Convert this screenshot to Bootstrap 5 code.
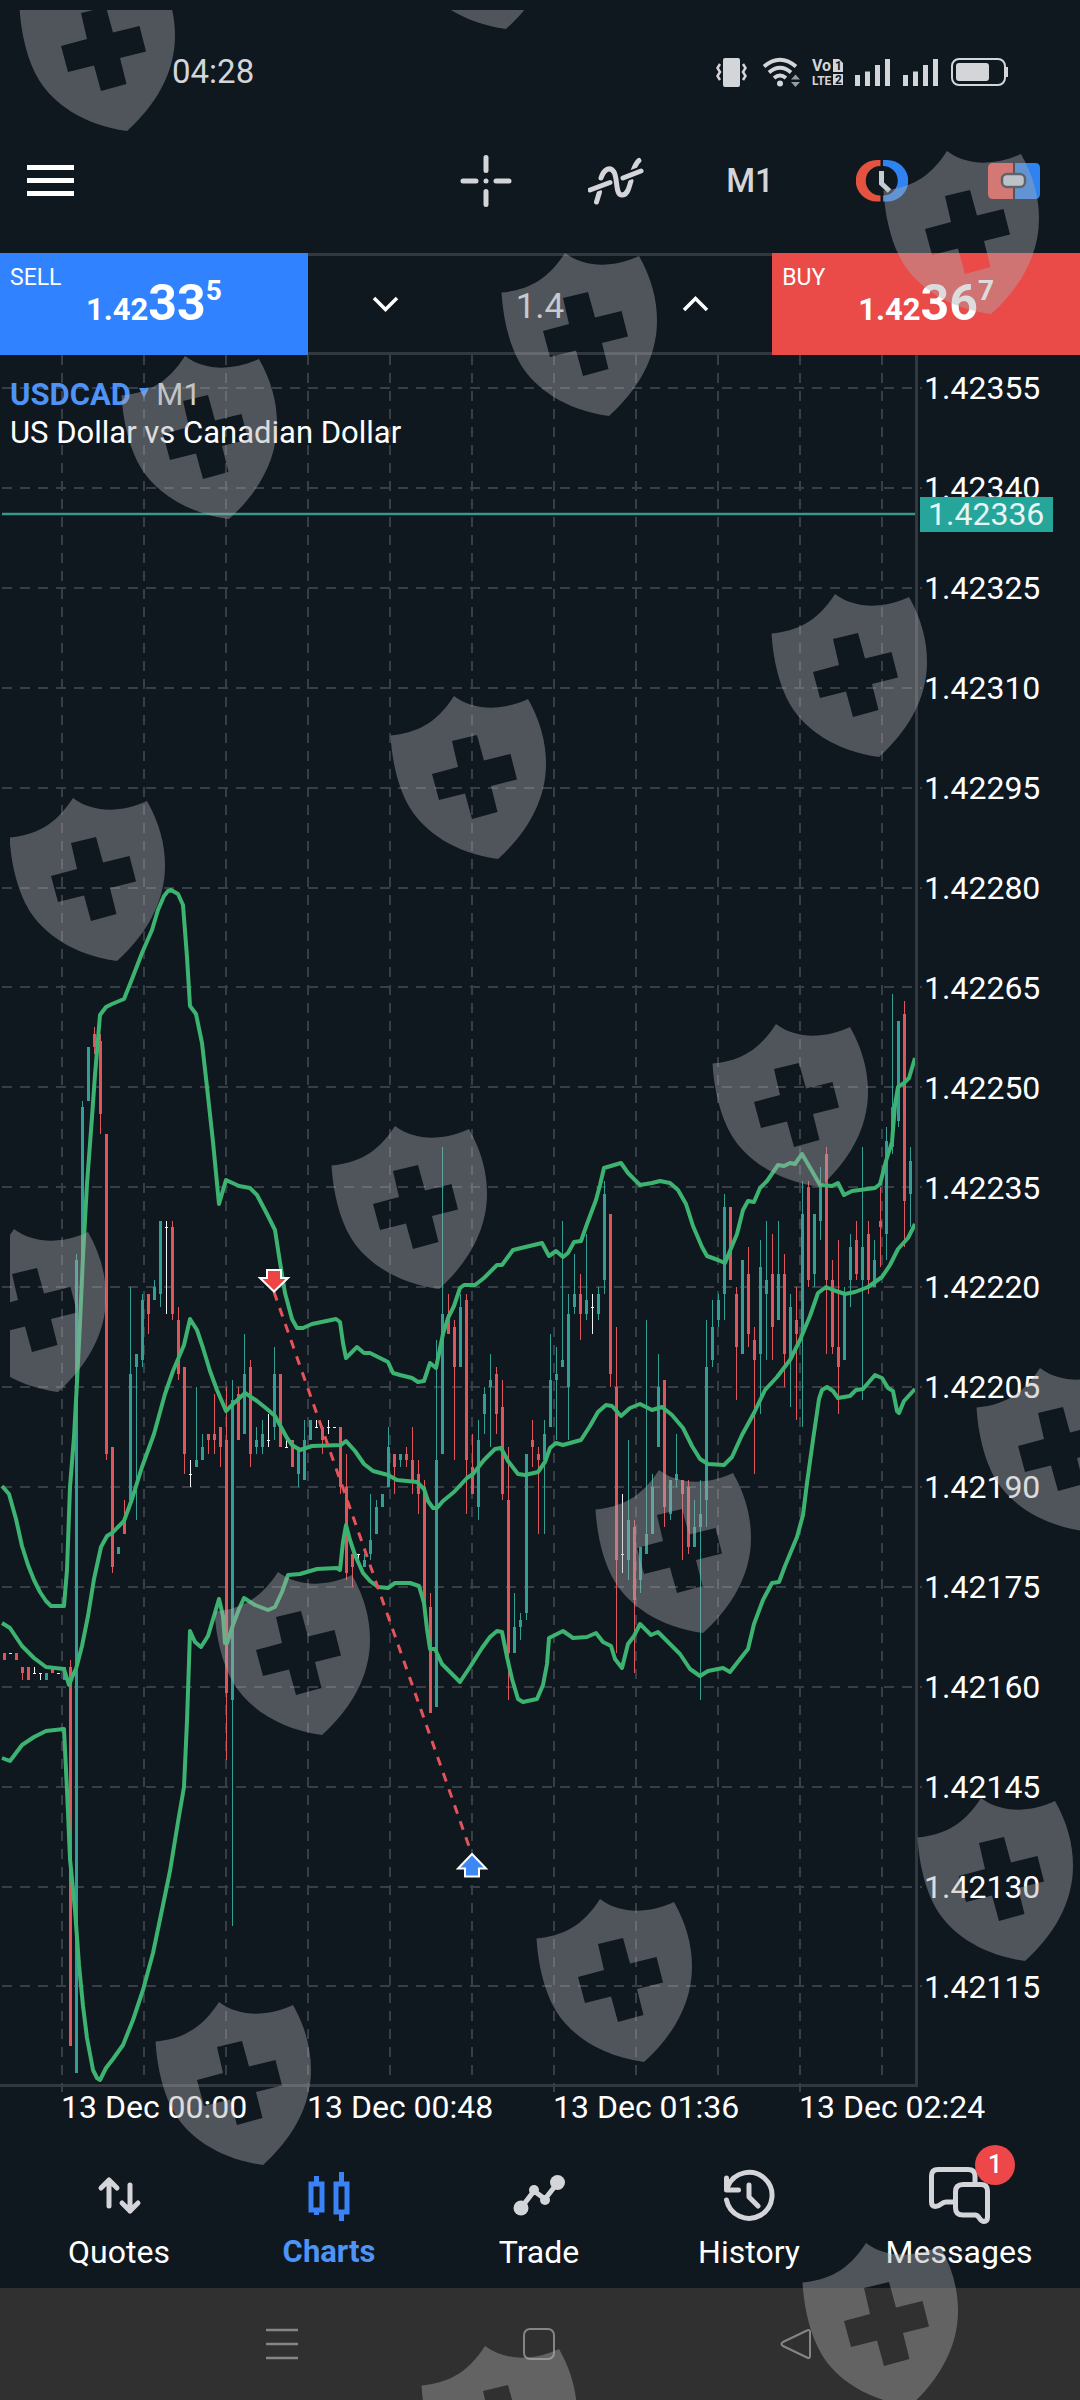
<!DOCTYPE html>
<html lang="en">
<head>
<meta charset="utf-8">
<meta name="viewport" content="width=device-width, initial-scale=1">
<title>USDCAD M1</title>
<link href="https://cdn.jsdelivr.net/npm/bootstrap@5.3.0/dist/css/bootstrap.min.css" rel="stylesheet">
<style>
  :root { --ink: #0f171f; --line: #32383f; --sell: #3082ff; --buy: #ea4b49; --icon: #d3d5d9; }
  body { background: var(--ink); color: #fff; font-family: Roboto, "Liberation Sans", sans-serif; }
  button { color: inherit; font-family: inherit; }
  svg { display: block; }
  .screen { overflow: hidden; }
  .statusbar { height: 144px; padding: 0 72px 0 172px; font-size: 33px; color: var(--icon); }
  .status-icons { gap: 12px; }
  .status-icons svg { overflow: visible; }
  .toolbar { height: 109px; padding: 0 0 35px 27px; color: var(--icon); }
  .tool { width: 132px; height: 74px; font-size: 33px; font-weight: 500; }
  .trade-row { height: 102px; }
  .quote { width: 28.5%; font-weight: 700; }
  .quote-sell { background: var(--sell); }
  .quote-buy { background: var(--buy); }
  .quote-side { top: 10px; left: 10px; font-size: 23px; font-weight: 400; line-height: 30px; }
  .quote-price { font-size: 31px; line-height: 60px; padding-top: 6px; }
  .quote-big { font-size: 50px; }
  .quote-sup { font-size: 28px; position: relative; top: -20px; }
  .volume { border: solid var(--line); border-width: 3px 0; }
  .volume input { width: 120px; padding: 6px 0 0; font-size: 35px; color: #dcdee1; background: none; border: 0; text-align: center; outline: 0; }
  .plot { min-width: 0; border-bottom: 3px solid var(--line); }
  .plot svg { width: 100%; height: auto; overflow: visible; }
  .chart-title { top: 21px; left: 10px; font-size: 31px; line-height: 38px; }
  .symbol { color: #4e93f6; font-weight: 700; }
  .prices { width: 165px; padding: 13px 0 80px 6px; border-left: 3px solid var(--line); font-size: 32px; line-height: 40px; }
  .price-now { left: 2px; top: 142px; width: 133px; padding-left: 8px; background: #26a69a; line-height: 35px; color: #e9f5f4; }
  .times { height: 43px; padding-left: 61px; font-size: 32px; line-height: 40px; }
  .times li { width: 246px; white-space: nowrap; }
  .tabs { height: 158px; padding: 33px 16px 0 14px; }
  .tab { width: 20%; color: #fff; font-size: 32px; line-height: 38px; }
  .tab svg { color: var(--icon); margin-bottom: 6px; }
  .tab.current, .tab.current svg { color: #3b82f6; }
  .tab.current { color: #4e93f6; font-weight: 700; font-size: 31px; }
  .counter { left: 48px; top: -18px; width: 40px; height: 40px; border-radius: 20px; background: #ee4749; color: #fff; font-size: 25px; line-height: 40px; font-weight: 500; }
  .sysbar { height: 112px; background: #303030; padding: 0 156px 0 153px; }
  .shields { inset: 10px 0 0 10px; overflow: hidden; pointer-events: none; z-index: 5; }
  .grid-line { stroke: #373e46; stroke-width: 2; stroke-dasharray: 10 8; }
  .band { fill: none; stroke: #3cb371; stroke-width: 4; stroke-linejoin: round; }
</style>
<script src="https://cdn.jsdelivr.net/npm/bootstrap@5.3.0/dist/js/bootstrap.bundle.min.js"></script>
</head>
<body>
<div class="screen position-relative">

  <div class="statusbar d-flex align-items-center justify-content-between">
    <span>04:28</span>
    <div class="status-icons d-flex align-items-center">
      <svg class="me-1" width="31" height="30" viewBox="0 0 31 30" fill="none" stroke="currentColor" stroke-width="2.500"><rect x="7" y="1" width="17" height="29" rx="2" fill="currentColor" stroke="none"/><path d="M4 7 1.500 11l2.500 4-2.500 4 2.500 4M27 7l2.500 4-2.500 4 2.500 4-2.500 4"/></svg>
      <svg width="37" height="30" viewBox="0 0 37 30" fill="none" stroke="currentColor" stroke-width="4"><path d="M1 9.500Q17 -4 33 9.500M6 15.500Q17 6 28 15.500M11 21q6-5 12 0"/><circle cx="17" cy="26.500" r="3" fill="currentColor" stroke="none"/><path d="M28 22.500l4.500-5 4.500 5zM28 25l4.500 5 4.500-5z" fill="currentColor" stroke="none" opacity=".7"/></svg>
      <svg width="31" height="28" viewBox="0 0 31 28" fill="currentColor" font-family="Roboto, sans-serif" font-weight="700"><text x="0" y="13" font-size="16">Vo</text><text x="0" y="27" font-size="12">LTE</text><path d="M21 1h6l4 4v9H21zM21 16h10v11H21z"/><g fill="#0f171f" font-size="12"><text x="23" y="12">1</text><text x="23" y="26">2</text></g></svg>
      <svg width="36" height="30" viewBox="0 0 36 30" fill="currentColor"><path d="M0 18h5v11H0zM10 14.500h5V29h-5zM20 8h5v21h-5zM30 2h5v27h-5z"/></svg>
      <svg width="36" height="30" viewBox="0 0 36 30" fill="currentColor"><path d="M0 18h5v11H0zM10 14.500h5V29h-5zM20 8h5v21h-5zM30 2h5v27h-5z"/></svg>
      <svg width="57" height="30" viewBox="0 0 57 30" fill="none" stroke="currentColor" stroke-width="2"><rect x="1" y="2" width="53" height="26" rx="7"/><rect x="5" y="6" width="33" height="18" rx="3" fill="currentColor" stroke="none"/><path d="M56 10v10"/></svg>
    </div>
  </div>

  <header class="toolbar d-flex align-items-center">
    <button class="btn p-0 border-0 me-auto" aria-label="Menu"><svg width="47" height="32" viewBox="0 0 47 32" fill="#fff"><path d="M0 0h47v5H0zM0 13h47v5H0zM0 26h47v5H0z"/></svg></button>
    <button class="tool btn p-0 border-0 d-flex align-items-center justify-content-center" aria-label="Crosshair"><svg width="54" height="54" viewBox="0 0 54 54" fill="none" stroke="#d3d5d9" stroke-width="5" stroke-linecap="round"><path d="M27 3.500v13M27 37.500v13M4 27h13M37 27h13"/><circle cx="27" cy="27" r="2.500" fill="#d3d5d9" stroke="none"/></svg></button>
    <button class="tool btn p-0 border-0 d-flex align-items-center justify-content-center" aria-label="Indicators"><svg width="60" height="60" viewBox="3 0 60 60" fill="none" stroke="#d3d5d9" stroke-width="5" stroke-linecap="round"><path d="M11.500 51L14.500 41M16 27C19 18 25 15 29 21C33 28 30 44 37 44C43 44 44 36 46 30M48 20Q51 12 54 9.500"/><path d="M5 39L25 31.500" stroke="#0f171f" stroke-width="8" stroke-linecap="butt"/><path d="M36 27.500L56 20" stroke="#0f171f" stroke-width="9" stroke-linecap="butt"/><path d="M5 39L25 31.500M38 27L56 20"/></svg></button>
    <button class="tool btn p-0 border-0 text-reset">M1</button>
    <button class="tool btn p-0 border-0 d-flex align-items-center justify-content-center" aria-label="New order"><svg width="52" height="42" viewBox="0 0 52 42"><path d="M24.500 0H21A21 20.500 0 0 0 21 41.500H24.500V35.500A14.500 14.500 0 0 1 24.500 6Z" fill="#e5523f"/><path d="M27 0H31A21 20.500 0 0 1 31 41.500H27V35.500A14.500 14.500 0 0 0 27 6Z" fill="#2e83f0"/><path d="M25.500 11v12.500l8 7.500" fill="none" stroke="#c3cbd3" stroke-width="5"/></svg></button>
    <button class="tool btn p-0 border-0 d-flex align-items-center justify-content-center" aria-label="One click trading"><svg width="52" height="38" viewBox="0 0 52 38"><path d="M25 1H5Q0 1 0 6V32Q0 37 5 37H25Z" fill="#f0544a"/><path d="M27 1H47Q52 1 52 6V32Q52 37 47 37H27Z" fill="#2e83f0"/><rect x="14" y="12" width="23" height="13" rx="5" fill="#c9d3da" stroke="#27303a" stroke-width="2.500"/></svg></button>
  </header>

  <div class="trade-row d-flex">
    <button class="quote quote-sell btn rounded-0 border-0 p-0 text-white position-relative">
      <span class="quote-side position-absolute">SELL</span>
      <span class="quote-price d-block">1.42<span class="quote-big">33</span><span class="quote-sup">5</span></span>
    </button>
    <div class="volume d-flex flex-grow-1 align-items-center justify-content-between px-5">
      <button class="btn border-0" aria-label="Decrease volume"><svg width="34" height="20" viewBox="0 0 34 20" fill="none" stroke="#fff" stroke-width="3.500"><path d="M6 4l11.500 11.500L29 4"/></svg></button>
      <input type="text" value="1.4" aria-label="Volume">
      <button class="btn border-0" aria-label="Increase volume"><svg width="34" height="20" viewBox="0 0 34 20" fill="none" stroke="#fff" stroke-width="3.500"><path d="M6 16L17.500 4.500 29 16"/></svg></button>
    </div>
    <button class="quote quote-buy btn rounded-0 border-0 p-0 text-white position-relative">
      <span class="quote-side position-absolute">BUY</span>
      <span class="quote-price d-block">1.42<span class="quote-big">36</span><span class="quote-sup">7</span></span>
    </button>
  </div>

  <main class="d-flex position-relative">
    <div class="plot flex-grow-1">
      <svg id="chart" viewBox="0 355 915 1729" role="img" aria-label="USDCAD one minute candles with Bollinger Bands">
        <g id="grid"></g>
        <path d="M2 514H915" stroke="#3a978c" stroke-width="2.500"/>
        <g id="candles" shape-rendering="crispEdges"></g>
        <polyline class="band" points="2,1486 9,1494 16,1519 22,1546 28,1565 34,1580 40,1592 46,1601 51,1606 64,1606 67,1570 70,1487 74,1437 77,1382 80,1323 83,1256 87,1184 92,1117 95,1075 100,1015 106,1007 112,1004 124,999 132,979 142,953 152,930 158,910 164,896 168,891 171,890 178,894 183,905 187,957 190,1006 196,1014 202,1043 207,1087 213,1142 219,1204 226,1180 239,1186 250,1188 257,1195 267,1214 275,1230 279,1256 285,1293 292,1319 297,1328 303,1328 312,1324 336,1319 340,1322 343,1343 346,1358 357,1347 364,1353 370,1353 388,1362 393,1373 400,1375 412,1378 418,1382 424,1381 430,1363 436,1368 443,1334 448,1318 454,1306 460,1288 464,1285 475,1285 484,1278 497,1265 502,1265 513,1250 542,1243 549,1256 556,1251 563,1257 568,1253 574,1242 581,1241 587,1224 596,1200 600,1185 604,1168 621,1163 628,1173 640,1185 652,1183 660,1181 670,1183 678,1190 686,1204 693,1226 702,1247 707,1256 718,1260 725,1263 732,1246 737,1234 743,1210 748,1201 754,1202 760,1188 767,1181 778,1165 784,1166 790,1163 795,1164 802,1154 812,1171 820,1185 832,1186 838,1183 844,1195 852,1191 875,1188 880,1184 886,1161 892,1142 895,1105 898,1087 904,1083 909,1078 915,1058"/>
        <polyline class="band" points="2,1623 10,1628 22,1646 34,1658 46,1667 64,1669 69,1685 73,1675 76,1669 82,1646 88,1616 94,1579 101,1547 107,1536 112,1533 124,1521 132,1499 142,1467 154,1434 165,1394 173,1371 184,1345 190,1319 197,1330 203,1348 210,1371 217,1390 226,1411 233,1404 245,1393 257,1401 267,1409 275,1416 287,1438 292,1445 300,1450 312,1446 341,1445 346,1441 355,1451 364,1464 373,1471 388,1475 397,1480 417,1482 424,1489 428,1501 433,1508 437,1508 443,1501 454,1492 467,1478 473,1474 484,1460 495,1449 501,1448 508,1461 518,1474 525,1475 538,1472 545,1462 550,1448 556,1443 563,1445 570,1443 581,1440 590,1426 598,1412 606,1405 612,1406 621,1416 630,1408 640,1404 652,1410 662,1407 672,1415 683,1428 692,1446 700,1459 708,1464 724,1465 732,1457 742,1435 754,1413 765,1390 777,1377 790,1360 800,1340 810,1316 818,1293 826,1287 833,1290 845,1294 855,1292 868,1287 882,1277 890,1265 898,1249 908,1238 915,1224"/>
        <polyline class="band" points="2,1758 10,1761 22,1745 34,1737 46,1731 64,1729 67,1790 70,1859 75,1910 79,1965 83,2006 87,2038 93,2070 97,2078 100,2080 106,2068 113,2059 123,2045 133,2020 143,1990 153,1953 163,1905 170,1871 178,1822 184,1787 187,1721 189,1662 190,1631 195,1642 201,1647 208,1636 214,1616 219,1599 223,1616 225,1643 227,1643 233,1625 239,1609 244,1598 255,1605 268,1610 275,1607 282,1592 288,1575 300,1574 317,1569 337,1568 340,1570 343,1542 346,1525 350,1540 355,1555 363,1573 370,1581 378,1587 388,1588 395,1583 410,1583 419,1586 424,1603 427,1629 430,1649 435,1649 442,1664 453,1675 460,1682 470,1667 482,1648 490,1637 497,1631 502,1632 507,1657 512,1679 518,1699 523,1702 537,1699 543,1685 547,1664 549,1638 563,1631 573,1638 587,1637 596,1633 603,1642 611,1646 615,1659 622,1668 628,1644 634,1636 640,1624 651,1635 658,1632 680,1654 690,1669 700,1676 708,1671 723,1668 730,1672 737,1663 748,1649 754,1624 763,1600 772,1583 779,1582 785,1566 797,1537 803,1515 807,1483 813,1440 819,1399 822,1390 827,1387 833,1391 838,1398 850,1396 856,1390 863,1389 875,1375 882,1378 888,1388 893,1391 897,1411 899,1413 904,1401 915,1389"/>
        <path d="M274 1292L471 1852" stroke="#e4525a" stroke-width="3" stroke-dasharray="9 8"/>
        <path d="M267 1270h14v8h7l-14 13.500-14-13.500h7z" fill="#ef4444" stroke="#fff" stroke-width="2"/>
        <path d="M465 1876.500h14v-8h7l-14-14.500-14 14.500h7z" fill="#3d88f5" stroke="#fff" stroke-width="2"/>
      </svg>
    </div>
    <div class="chart-title position-absolute">
      <div><a href="#" class="symbol text-decoration-none">USDCAD</a> <svg class="d-inline-block align-middle mb-2" width="10" height="10" viewBox="0 0 10 10" fill="#4e93f6"><path d="M0 0h10L5 10z"/></svg> <span style="color:#d3d5d9">M1</span></div>
      <div>US Dollar vs Canadian Dollar</div>
    </div>
    <div class="prices position-relative">
      <ul class="list-unstyled m-0 h-100 d-flex flex-column justify-content-between">
        <li>1.42355</li><li>1.42340</li><li>1.42325</li><li>1.42310</li><li>1.42295</li><li>1.42280</li><li>1.42265</li><li>1.42250</li><li>1.42235</li><li>1.42220</li><li>1.42205</li><li>1.42190</li><li>1.42175</li><li>1.42160</li><li>1.42145</li><li>1.42130</li><li>1.42115</li>
      </ul>
      <div class="price-now position-absolute">1.42336</div>
    </div>
    <div class="axis-end"></div>
  </main>
  <ul class="times list-unstyled d-flex m-0"><li>13 Dec 00:00</li><li>13 Dec 00:48</li><li>13 Dec 01:36</li><li>13 Dec 02:24</li></ul>

  <nav class="tabs d-flex">
    <a href="#" class="tab d-flex flex-column align-items-center text-decoration-none"><svg width="64" height="64" viewBox="0 0 64 64" fill="none" stroke="currentColor" stroke-width="5" stroke-linecap="round" stroke-linejoin="round"><path d="M22 43V17M14 25l8-8 8 8M43 22v26M35 40l8 8 8-8"/></svg>Quotes</a>
    <a href="#" class="tab current d-flex flex-column align-items-center text-decoration-none" aria-current="page"><svg width="64" height="64" viewBox="0 0 64 64" fill="none" stroke="currentColor" stroke-width="5"><path d="M14 21h11v26H14zM39 21h11v28H39zM19.500 13v8M19.500 47v5M44.500 9v12M44.500 49v9"/></svg>Charts</a>
    <a href="#" class="tab d-flex flex-column align-items-center text-decoration-none"><svg width="64" height="64" viewBox="0 0 64 64" fill="currentColor" stroke="currentColor" stroke-width="5"><path d="M14 45L27 28L38 36L50.500 20" fill="none"/><g stroke="none"><circle cx="14" cy="45" r="7.500"/><circle cx="27" cy="27" r="5"/><circle cx="38" cy="37" r="5"/><circle cx="50.500" cy="19.500" r="7.500"/></g></svg>Trade</a>
    <a href="#" class="tab d-flex flex-column align-items-center text-decoration-none"><svg width="64" height="64" viewBox="0 0 64 64" fill="none" stroke="currentColor" stroke-width="5" stroke-linecap="round" stroke-linejoin="round"><path d="M9.500 37A23 23 0 1 0 11 23M9.500 15v12h12M32 22v12l9 9"/></svg>History</a>
    <a href="#" class="tab d-flex flex-column align-items-center text-decoration-none"><span class="position-relative"><svg width="64" height="64" viewBox="0 0 64 64" fill="none" stroke="currentColor" stroke-width="5" stroke-linejoin="round"><path d="M27 39H19C14 39 14 43.500 8.500 43.500Q4.500 43.500 4.500 39V13Q4.500 6.500 11 6.500H41Q48 6.500 48 13V20"/><path d="M36 21.500H54Q60.500 21.500 60.500 28V54Q60.500 58.500 57 58.500C52 58.500 53 52 48 52H36Q28.500 52 28.500 45V29Q28.500 21.500 36 21.500Z"/></svg><span class="counter position-absolute text-center">1</span></span>Messages</a>
  </nav>

  <div class="sysbar d-flex">
    <button class="btn border-0 p-0 flex-fill w-100 d-flex align-items-center justify-content-center" aria-label="Recent apps"><svg width="32" height="34" viewBox="0 0 32 34" fill="none" stroke="#858585" stroke-width="2.500"><path d="M0 3h32M0 17h32M0 31h32"/></svg></button>
    <button class="btn border-0 p-0 flex-fill w-100 d-flex align-items-center justify-content-center" aria-label="Home"><svg width="34" height="34" viewBox="0 0 34 34" fill="none" stroke="#858585" stroke-width="2"><rect x="2" y="2" width="30" height="30" rx="6"/></svg></button>
    <button class="btn border-0 p-0 flex-fill w-100 d-flex align-items-center justify-content-center" aria-label="Back"><svg width="34" height="34" viewBox="0 0 34 34" fill="none" stroke="#858585" stroke-width="2" stroke-linejoin="round"><path d="M4 15L28 3.500Q31 2 31 5V29Q31 32 28 30.500L4 19Q1 17 4 15Z"/></svg></button>
  </div>

  <div class="shields position-absolute">
    <svg width="1080" height="2400" viewBox="10 10 1080 2400" fill="#ababad" fill-opacity=".42" aria-hidden="true">
      <defs><path id="shield" fill-rule="evenodd" d="M-63.500 39.500C-38 37 -18 28 0 0C20 15 48 15 74 3C86 24 92 46 92 68C92 105 72 138 44 163C0 157 -30 135 -44 112C-56 92 -62 65 -63.500 39.500ZM-2 45L4 71L-22 78L-15 104L11 97.500L18 123L43.500 116L37 90L63 83.500L56.500 58L30 64.500L23 39Z"/></defs>
      <g id="shields"></g>
    </svg>
  </div>
</div>

<script>
const NS = 'http://www.w3.org/2000/svg';
function add(parent, tag, attrs) {
  const el = document.createElementNS(NS, tag);
  for (const k in attrs) el.setAttribute(k, attrs[k]);
  parent.appendChild(el);
}
const priceY = p => 388 + (355 - p) * 6.66;

const grid = document.getElementById('grid');
for (let k = 0; k < 17; k++) {
  const y = Math.round(priceY(355 - 15 * k));
  add(grid, 'line', { x1: 2, y1: y, x2: 922, y2: y, class: 'grid-line' });
}
for (let k = 0; k < 11; k++) {
  const x = 62 + 82 * k;
  add(grid, 'line', { x1: x, y1: 355, x2: x, y2: k % 3 ? 2080 : 2092, class: 'grid-line' });
}

// One candle per minute: high, open, close, low, in points above 1.42000
const candles = `165 165 164 164|165 165 165 165|165 165 164 164|163 163 162 161|163 163 161 161|163 162 162 162|162 162 162 161|162 161 162 161|163 163 162 162|162 162 162 162
163 161 163 161|164 163 106 106|225 102 224 102|248 224 247 224|256 248 256 248|259 258 256 255|258 257 246 243|243 243 195 194|196 196 178 177|181 180 181 180
188 185 183 183|220 188 207 188|210 208 210 185|219 209 218 208|219 219 216 213|221 218 220 218|230 219 230 217|230 229 229 216|230 229 216 215|217 215 207 206
208 208 195 192|194 192 192 190|205 193 194 193|198 194 196 194|198 198 197 195|204 198 197 195|199 199 196 193|205 197 159 149|206 158 203 124|205 204 197 197
213 198 207 198|209 208 195 193|199 196 197 195|200 196 198 195|201 197 197 196|211 199 207 197|207 207 196 196|198 196 196 196|197 197 193 193|196 192 196 190
200 191 197 191|200 197 200 197|200 199 199 199|199 199 197 195|200 199 199 198|199 199 199 199|199 199 190 189|195 190 177 176|180 180 178 175|180 180 180 179
180 178 179 178|189 180 182 179|188 183 187 183|189 187 189 187|199 190 196 190|195 195 193 189|195 194 195 193|196 195 194 193|199 194 191 189|194 192 189 186
191 190 172 172|174 172 156 156|212 157 194 157|241 195 216 195|219 216 213 213|215 214 208 194|219 208 217 208|219 218 194 186|198 193 189 189|200 187 197 185
205 201 204 198|210 205 206 196|208 207 201 198|206 202 189 188|196 188 165 158|174 165 169 165|171 169 170 167|195 171 195 170|200 197 196 193|196 195 194 183
200 194 198 183|213 199 206 199|211 206 207 197|230 208 209 208|219 205 216 197|225 217 219 216|222 219 216 212|228 216 218 215|219 217 217 213|220 216 219 215
236 221 234 219|231 231 207 205|214 205 179 165|189 180 180 177|197 179 185 176|185 184 173 162|181 176 181 174|215 180 183 180|192 183 190 183|210 196 205 196
206 206 187 184|191 186 191 185|198 191 192 190|191 191 189 179|191 190 181 180|188 181 184 181|191 184 186 158|215 188 208 184|218 209 214 208|219 215 218 214
234 219 232 215|232 232 221 221|220 219 211 203|224 210 224 210|226 222 213 211|214 212 209 192|227 210 223 201|230 219 221 209|228 222 214 209|230 215 222 215
225 222 210 205|219 209 217 202|220 215 213 200|236 213 231 199|236 235 221 220|231 222 231 220|238 230 235 227|241 240 221 210|224 221 211 210|227 211 208 201
220 209 219 209|228 221 226 217|230 227 222 221|241 221 226 203|230 228 221 219|227 220 224 220|235 230 229 223|244 228 242 224|264 241 247 240|260 245 260 244
263 261 233 226|241 234 239 229`.split(/[|\n]/);

const layer = document.getElementById('candles');
candles.forEach((row, i) => {
  const [high, open, close, low] = row.split(' ').map(p => Math.round(priceY(+p)));
  const x = 3 + 6 * i;
  const fill = open === close ? '#f2f5f7' : close < open ? '#339e93' : '#dd565c';
  if (low > high) add(layer, 'rect', { x: x + 1, y: high, width: 1, height: low - high, fill });
  add(layer, 'rect', { x, y: Math.min(open, close), width: 3, height: Math.max(1, Math.abs(open - close)), fill });
});

[[83, -32], [462, -134], [947, 151], [565, 253], [185, 356], [835, 594], [454, 696], [73, 798], [776, 1024],
 [395, 1126], [14, 1229], [1040, 1368], [659, 1470], [278, 1572], [981, 1798], [600, 1899], [219, 2002],
 [866, 2243], [485, 2346]].forEach(([x, y]) =>
  add(document.getElementById('shields'), 'use', { href: '#shield', x, y }));
</script>
</body>
</html>
